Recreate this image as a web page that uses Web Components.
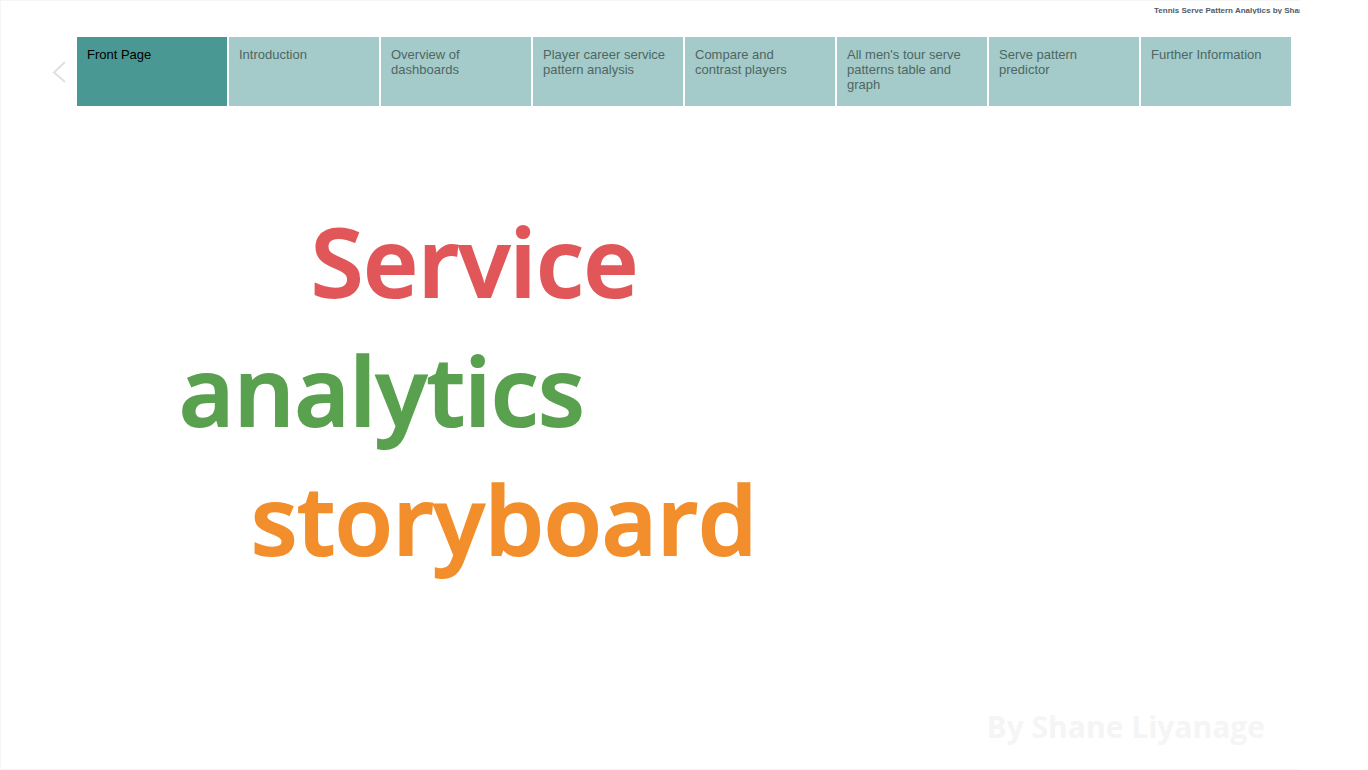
<!DOCTYPE html>
<html lang="en">
<head>
<meta charset="utf-8">
<title>Tennis Serve Pattern Analytics</title>
<style>
html, body { height: 100%; }
body { margin: 0; background: #fff; font-family: "Liberation Sans", Arial, sans-serif; }
</style>
</head>
<body>
<story-frame>
  <story-title slot="title">Tennis Serve Pattern Analytics by Shane Liyanage</story-title>
  <story-nav slot="nav">
    <story-tab active>Front Page</story-tab>
    <story-tab>Introduction</story-tab>
    <story-tab>Overview of dashboards</story-tab>
    <story-tab>Player career service pattern analysis</story-tab>
    <story-tab>Compare and contrast players</story-tab>
    <story-tab>All men's tour serve patterns table and graph</story-tab>
    <story-tab>Serve pattern predictor</story-tab>
    <story-tab>Further Information</story-tab>
  </story-nav>
  <story-cover>
    <span slot="first">Service</span>
    <span slot="second">analytics</span>
    <span slot="third">storyboard</span>
    <span slot="author">By Shane Liyanage</span>
  </story-cover>
</story-frame>
<script>
class BaseElement extends HTMLElement {
  connectedCallback() {
    if (this.shadowRoot) return;
    this.attachShadow({ mode: "open" }).innerHTML = this.constructor.markup;
  }
}

customElements.define("story-frame", class extends BaseElement {
  static markup = `
    <style>
      :host { display: flex; min-height: 100%; box-sizing: border-box; padding-right: 68px; }
      main { flex: 1; min-width: 0; display: flex; flex-direction: column; overflow: hidden;
        border: 1px solid #f5f5f5; border-right: 0; }
      header { height: 36px; display: flex; justify-content: flex-end; }
    </style>
    <main>
      <header><slot name="title"></slot></header>
      <slot name="nav"></slot>
      <slot></slot>
    </main>`;
});

customElements.define("story-title", class extends BaseElement {
  static markup = `
    <style>
      :host { display: block; width: 146px; height: 13px; overflow: hidden; }
      h1 { margin: 0; padding-top: 5px; font-size: 8px; line-height: 10px; font-weight: 700;
        color: #4f5b67; white-space: nowrap; }
    </style>
    <h1><slot></slot></h1>`;
});

customElements.define("story-nav", class extends BaseElement {
  static markup = `
    <style>
      :host { display: flex; align-items: stretch; padding: 0 9px 0 48px; }
      button { flex: none; width: 28px; padding: 0; border: 0; background: none; display: flex;
        align-items: center; justify-content: flex-start; }
      svg { display: block; }
      nav { flex: 1; display: grid; grid-template-columns: repeat(8, minmax(0, 1fr)); gap: 2px; min-height: 69px; }
    </style>
    <button type="button" aria-label="Previous" disabled>
      <svg width="18" height="24" viewBox="0 0 18 24" fill="none" stroke="#e0e0e0" stroke-width="2">
        <path d="M16 2 5 12.5 16 22"/>
      </svg>
    </button>
    <nav><slot></slot></nav>`;
});

customElements.define("story-tab", class extends BaseElement {
  static markup = `
    <style>
      :host { display: grid; background: #a4cbc9; color: #4e6664; }
      :host([active]) { background: #499893; color: #000; }
      a { padding: 10px 14px 10px 10px; font-size: 13px; line-height: 15px; color: inherit; text-decoration: none; }
    </style>
    <a href="#"><slot></slot></a>`;
});

customElements.define("story-cover", class extends BaseElement {
  static markup = `
    <style>
      :host { flex: 1; display: flex; flex-direction: column; justify-content: space-between;
        font-family: "Open Sans", "Noto Sans", sans-serif; }
      h2 { margin: 0; padding-top: 90px; font-size: 95px; line-height: 129px; font-weight: 600;
        -webkit-text-stroke: 2px currentColor; }
      .line { display: block; white-space: nowrap; }
      .red { color: #e15759; padding-left: 310px; }
      .green { color: #59a14f; padding-left: 178px; }
      .orange { color: #f28e2b; padding-left: 250px; }
      p { margin: 0; padding: 0 35px 20px; font-size: 30px; line-height: 44px; font-weight: 700; color: #f5f5f5; text-align: right; }
    </style>
    <h2>
      <span class="line red"><slot name="first"></slot></span>
      <span class="line green"><slot name="second"></slot></span>
      <span class="line orange"><slot name="third"></slot></span>
    </h2>
    <p><slot name="author"></slot></p>`;
});
</script>
</body>
</html>
